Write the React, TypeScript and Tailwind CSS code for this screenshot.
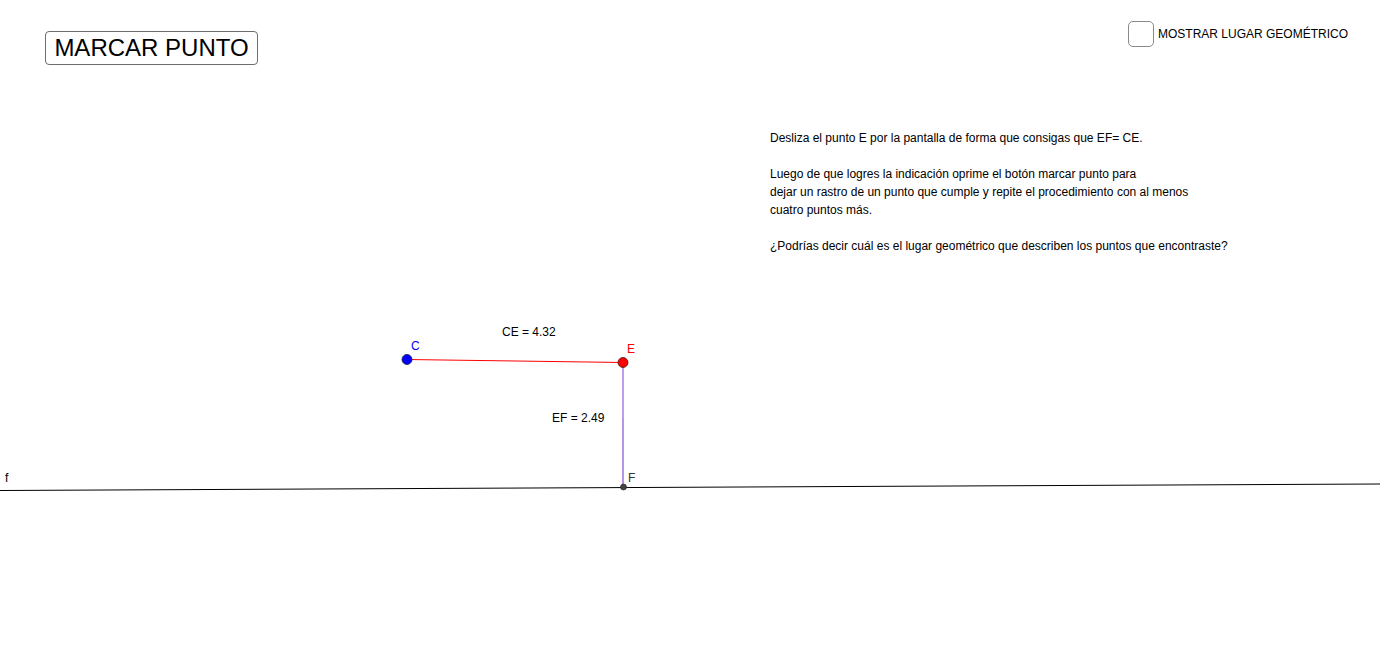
import React from 'react';

const lines = [
  'Desliza el punto E por la pantalla de forma que consigas que EF= CE.',
  '',
  'Luego de que logres la indicación oprime el botón marcar punto para',
  'dejar un rastro de un punto que cumple y repite el procedimiento con al menos',
  'cuatro puntos más.',
  '',
  '¿Podrías decir cuál es el lugar geométrico que describen los puntos que encontraste?',
];

function Construction() {
  return (
    <svg
      className="absolute inset-0"
      width={1382}
      height={647}
      viewBox="0 0 1382 647"
      style={{ fontFamily: '"Liberation Sans", Arial, sans-serif' }}
    >
      {/* line f */}
      <line x1={0} y1={490.5} x2={1380} y2={484} stroke="#000" strokeWidth={1} />
      <text x={5} y={482} fontSize={12} fill="#000">f</text>

      {/* segment CE */}
      <line x1={407} y1={359.5} x2={623} y2={362.5} stroke="#ff0000" strokeWidth={1} />
      {/* segment EF */}
      <line x1={623} y1={362} x2={623} y2={418} stroke="#a77ee8" strokeWidth={1.5} />
      <line x1={623} y1={418} x2={623} y2={487} stroke="#6a2fc9" strokeWidth={1} />

      {/* points */}
      <circle cx={407} cy={359.5} r={5} fill="#0000ff" stroke="#1a1a40" strokeWidth={0.8} />
      <circle cx={623} cy={362.5} r={5} fill="#ff0000" stroke="#401a1a" strokeWidth={0.8} />
      <circle cx={623.5} cy={487} r={3} fill="#444" stroke="#222" strokeWidth={0.6} />

      <text x={411} y={350} fontSize={12} fill="#0000ff">C</text>
      <text x={627} y={353} fontSize={12} fill="#ff0000">E</text>
      <text x={628} y={482} fontSize={12} fill="#333">F</text>

      <text x={502} y={336} fontSize={12} fill="#000">CE = 4.32</text>
      <text x={552} y={422} fontSize={12} fill="#000">EF = 2.49</text>
    </svg>
  );
}

export default function App() {
  return (
    <div
      className="relative w-full h-[647px] bg-white overflow-hidden text-black"
      style={{ fontFamily: '"Liberation Sans", Arial, sans-serif' }}
    >
      <Construction />

      <div className="relative flex items-start justify-between pt-5 pl-[45px] pr-[34px]">
        <button className="mt-[11px] w-[213px] h-[34px] flex items-center justify-center border border-[#6e6e6e] rounded-[4px] bg-white text-[24px] leading-none">
          MARCAR PUNTO
        </button>

        <label className="flex items-center gap-[4px] mt-px">
          <span className="block w-[26px] h-[26px] border border-[#8a8a8a] rounded-[5px] bg-white" />
          <span className="text-[12px] leading-none">MOSTRAR LUGAR GEOMÉTRICO</span>
        </label>
      </div>

      <div className="relative mt-[64px] pl-[770px] text-[12px] leading-[18px]">
        {lines.map((l, i) => (
          <p key={i} className="h-[18px] whitespace-nowrap">{l}</p>
        ))}
      </div>
    </div>
  );
}
